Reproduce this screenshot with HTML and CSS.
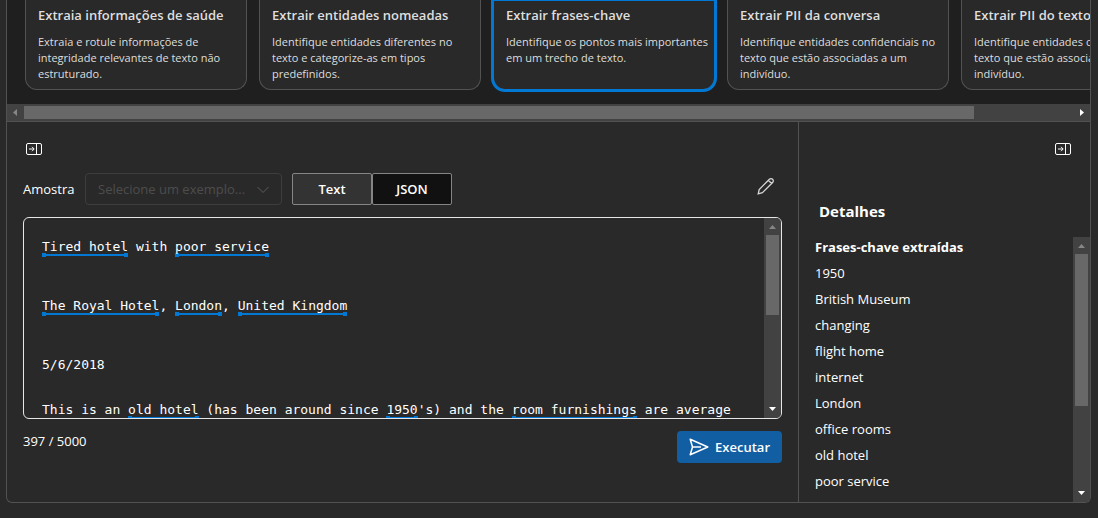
FILE: index.html
```html
<!DOCTYPE html>
<html lang="pt-BR">
<head>
<meta charset="utf-8">
<title>Extrair frases-chave</title>
<link rel="stylesheet" href="styles.css">
</head>
<body>
<main class="panel">
  <section class="tasks">
    <div class="cards">
      <article class="card"><h2>Extraia informações de saúde</h2><p>Extraia e rotule informações de integridade relevantes de texto não estruturado.</p></article>
      <article class="card"><h2>Extrair entidades nomeadas</h2><p>Identifique entidades diferentes no texto e categorize-as em tipos predefinidos.</p></article>
      <article class="card selected"><h2>Extrair frases-chave</h2><p>Identifique os pontos mais importantes em um trecho de texto.</p></article>
      <article class="card"><h2>Extrair PII da conversa</h2><p>Identifique entidades confidenciais no texto que estão associadas a um indivíduo.</p></article>
      <article class="card"><h2>Extrair PII do texto</h2><p>Identifique entidades confidenciais no texto que estão associadas a um indivíduo.</p></article>
    </div>
    <div class="bar bar-x" aria-hidden="true">
      <svg class="arrow dim" viewBox="0 0 17 17"><path d="M10 5v7L6 8.500z"/></svg>
      <div class="track"><div class="thumb"></div></div>
      <svg class="arrow" viewBox="0 0 17 17"><path d="M7 5v7l4-3.500z"/></svg>
    </div>
  </section>
  <div class="work">
    <section class="input-side">
      <button class="icon-button" type="button" aria-label="Recolher entrada">
        <svg width="16" height="12" viewBox="0 0 16 12"><rect x=".5" y=".5" width="15" height="11" rx="1.500" class="line"/><path class="line" d="M10.500 .5v11"/><path class="line" d="M3 6h5M6 3.800L8.200 6 6 8.200"/></svg>
      </button>
      <div class="toolbar">
        <label for="sample">Amostra</label>
        <div class="select-wrap">
          <select id="sample" disabled><option>Selecione um exemplo...</option></select>
          <svg class="chevron" width="14" height="8" viewBox="0 0 14 8"><path d="M1.500 1L7 6.500 12.500 1"/></svg>
        </div>
        <div class="toggle">
          <button type="button">Text</button><button type="button" class="active">JSON</button>
        </div>
        <button class="icon-button edit" type="button" aria-label="Editar">
          <svg width="18" height="18" viewBox="0 0 18 18"><path class="line" d="M1.200 16.800l1-4.300L12.400 2.300c.9-.9 2.300-.9 3.200 0s.9 2.300 0 3.200L5.400 15.700zM11.400 3.300l3.200 3.200"/></svg>
        </button>
      </div>
      <div class="editor">
        <div class="document" role="textbox" aria-multiline="true" aria-label="Texto" tabindex="0">
          <p><mark>Tired hotel</mark> with <mark>poor service</mark></p>
          <p><mark>The Royal Hotel</mark>, <mark>London</mark>, <mark>United Kingdom</mark></p>
          <p>5/6/2018</p>
          <p class="body-line">This is an <mark>old hotel</mark> (has been around since <mark>1950</mark>'s) and the <mark>room furnishings</mark> are average</p>
        </div>
        <div class="bar bar-y editor-bar" aria-hidden="true">
          <svg class="arrow dim" viewBox="0 0 17 17"><path d="M5 11h7L8.500 7z"/></svg>
          <div class="track"><div class="thumb"></div></div>
          <svg class="arrow" viewBox="0 0 17 17"><path d="M5 6h7l-3.500 4z"/></svg>
        </div>
      </div>
      <div class="footer">
        <span>397 / 5000</span>
        <button class="run" type="button">
          <svg width="20" height="18" viewBox="0 0 20 18"><path d="M1.200 1.200L18.800 9 1.200 16.800 3.500 9zM3.500 9H12"/></svg>
          Executar
        </button>
      </div>
    </section>
    <aside class="details">
      <button class="icon-button" type="button" aria-label="Recolher detalhes">
        <svg width="16" height="12" viewBox="0 0 16 12"><rect x=".5" y=".5" width="15" height="11" rx="1.500" class="line"/><path class="line" d="M10.500 .5v11"/><path class="line" d="M3 6h5M6 3.800L8.200 6 6 8.200"/></svg>
      </button>
      <h2>Detalhes</h2>
      <div class="results">
        <div class="phrases">
          <h3>Frases-chave extraídas</h3>
          <ul>
            <li>1950</li><li>British Museum</li><li>changing</li><li>flight home</li><li>internet</li><li>London</li><li>office rooms</li><li>old hotel</li><li>poor service</li>
          </ul>
        </div>
        <div class="bar bar-y details-bar" aria-hidden="true">
          <svg class="arrow dim" viewBox="0 0 17 17"><path d="M5 11h7L8.500 7z"/></svg>
          <div class="track"><div class="thumb"></div></div>
          <svg class="arrow" viewBox="0 0 17 17"><path d="M5 6h7l-3.500 4z"/></svg>
        </div>
      </div>
    </aside>
  </div>
</main>
</body>
</html>
```
FILE: styles.css
```css
* { box-sizing: border-box; }
body {
  margin: 0;
  padding: 0 7px 15px 6px;
  background: #292929;
  color: #fff;
  font: 13px/20px "Open Sans", "Noto Sans", sans-serif;
}
h2, h3, p, ul { margin: 0; padding: 0; }
ul { list-style: none; }
button, select { font: inherit; color: inherit; margin: 0; }
.line { fill: none; stroke: currentColor; }

.panel {
  border: 1px solid #525252;
  border-top: 0;
  border-radius: 0 0 6px 6px;
  overflow: hidden;
}
.tasks { background: #1f1f1f; border-bottom: 1px solid #525252; }
.cards { display: flex; gap: 12px; padding: 0 18px 14px; overflow: hidden; }
.card {
  flex: 0 0 222px;
  padding: 5px 0 7px 12px;
  background: #292929;
  border: 1px solid #525252;
  border-top: 0;
  border-radius: 0 0 12px 12px;
  color: #dedede;
}
.card h2 { font-size: 13px; line-height: 20px; font-weight: 600; white-space: nowrap; }
.card p { margin-top: 9px; font-size: 11px; line-height: 16px; }
.card.selected { outline: 3px solid #0078d4; outline-offset: -1px; }

.bar { display: flex; background: #424242; flex: none; }
.bar .arrow { width: 17px; height: 17px; flex: none; fill: #fff; }
.bar .dim { fill: #868686; }
.track { flex: 1; min-width: 0; min-height: 0; }
.thumb { background: #686868; }
.bar-x .track { padding: 2px 0; }
.bar-x .thumb { width: 90.6%; height: 13px; }
.bar-y { flex-direction: column; width: 17px; }
.bar-y .track { padding: 0 2px; }
.editor-bar .thumb { height: 48%; }
.details-bar .thumb { height: 66%; }

.work { display: grid; grid-template-columns: minmax(0, 1fr) 291px; }
.input-side { padding: 16px; border-right: 1px solid #525252; }
.icon-button {
  display: grid;
  place-items: center;
  width: 22px;
  height: 22px;
  padding: 0;
  background: none;
  border: 0;
}
.toolbar { display: flex; align-items: center; margin-top: 13px; }
.toolbar label { min-width: 52px; }
.select-wrap { position: relative; width: 197px; margin: 0 10px; }
.select-wrap select {
  appearance: none;
  display: block;
  width: 100%;
  height: 32px;
  padding: 0 32px 0 12px;
  background: transparent;
  border: 1px solid #3d3d3d;
  border-radius: 4px;
  color: #4d4d4d;
  opacity: 1;
}
.chevron { position: absolute; right: 12px; top: 13px; fill: none; stroke: #5c5c5c; }
.toggle { display: flex; }
.toggle button {
  width: 80px;
  height: 32px;
  padding: 0;
  background: #333;
  border: 1px solid #858585;
  border-radius: 2px;
  font-weight: 600;
}
.toggle .active { background: #111; }
.edit { align-self: flex-start; height: 26px; margin-left: auto; margin-right: 5px; color: #d6d6d6; }
.edit svg { stroke-width: 1.3; }
.editor {
  display: flex;
  height: 202px;
  margin-top: 12px;
  border: 1px solid #e6e6e6;
  border-radius: 6px;
  overflow: hidden;
}
.document {
  flex: 1;
  min-width: 0;
  padding: 21px 0 0 18px;
  overflow: hidden;
  font: 13px/15px "DejaVu Sans Mono", monospace;
  white-space: nowrap;
}
.document p + p { margin-top: 44px; }
.document p + .body-line { margin-top: 30px; }
.document mark {
  padding-bottom: 3px;
  color: inherit;
  background:
    linear-gradient(#0078d4, #0078d4) left bottom / 4px 4px no-repeat,
    linear-gradient(#0078d4, #0078d4) right bottom / 4px 4px no-repeat,
    linear-gradient(#0078d4, #0078d4) left bottom 1px / 100% 2px no-repeat;
}
.footer { display: flex; justify-content: space-between; margin-top: 12px; padding-bottom: 23px; }
.run {
  display: flex;
  align-items: center;
  gap: 6px;
  height: 32px;
  padding: 0 12px;
  background: #115ea3;
  border: 0;
  border-radius: 4px;
  font-weight: 600;
}
.run svg { fill: none; stroke: #fff; stroke-width: 1.5; stroke-linejoin: round; }

.details { display: flex; flex-direction: column; padding: 16px 0 0 16px; }
.details .icon-button { align-self: flex-end; margin-right: 16px; }
.details h2 { margin: 41px 0 16px 4px; font-size: 15px; line-height: 20px; font-weight: 700; }
.results { display: flex; height: 265px; }
.phrases { flex: 1; overflow: hidden; line-height: 26px; }
.phrases h3 { font-size: 13px; line-height: 20px; font-weight: 700; margin-bottom: 3px; }
```
